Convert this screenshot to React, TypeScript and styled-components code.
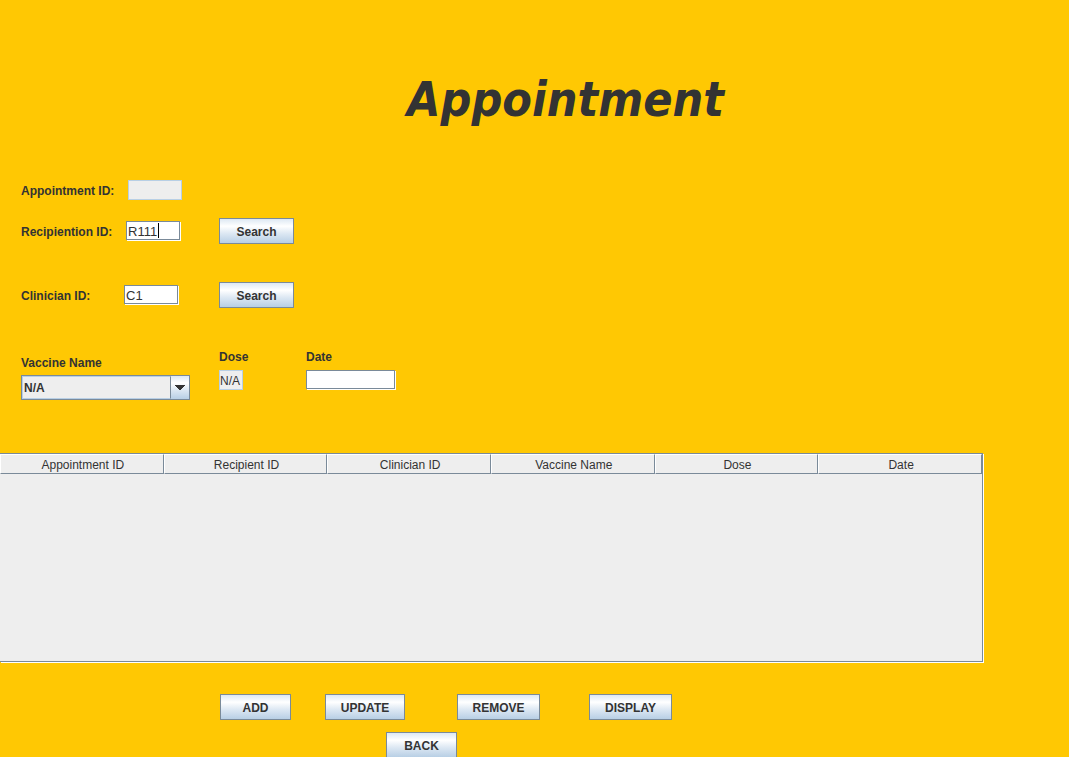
import React from "react";
import styled, { createGlobalStyle, css } from "styled-components";

const ink = "#333333";
const line = "#7a8a99";
const pale = "#b8cfe5";
const panel = "#eeeeee";

const GlobalStyle = createGlobalStyle`
  *, *::before, *::after { box-sizing: border-box; }
  body {
    margin: 0;
    background: #ffc803;
    color: ${ink};
    font: 12px/16px "Liberation Sans", Arial, sans-serif;
  }
`;

const metalGradient = css`
  background: linear-gradient(#dde8f3 0%, #ffffff 30%, #dde8f3 60%, ${pale} 100%);
`;

const Page = styled.main`
  height: 100vh;
  overflow: auto;
  scrollbar-width: none;
`;

const Title = styled.h1`
  margin: 0;
  padding: 70px 0 52px 62px;
  font: italic bold 48px/58px "DejaVu Sans Condensed", "DejaVu Sans", sans-serif;
  text-align: center;
`;

const Form = styled.form`
  padding-left: 21px;
`;

const Row = styled.div<{ $gap?: number }>`
  display: grid;
  grid-template-columns: 198px auto;
  justify-content: start;
  align-items: center;
  margin-bottom: ${(p) => p.$gap ?? 0}px;
`;

const Entry = styled.div<{ $labelWidth: number }>`
  display: grid;
  grid-template-columns: ${(p) => p.$labelWidth}px auto;
  justify-content: start;
  align-items: center;
`;

const Label = styled.label`
  padding-top: 2px;
  font-weight: bold;
  white-space: nowrap;
`;

const InputWrap = styled.span`
  position: relative;
  display: flex;
`;

const Caret = styled.span`
  position: absolute;
  left: 32px;
  top: 2px;
  width: 1px;
  height: 15px;
  background: #000;
`;

const Input = styled.input<{ $width: number }>`
  display: block;
  width: ${(p) => p.$width}px;
  height: 19px;
  margin: 0 0 1px;
  padding: 1px 1px 0;
  border: 1px solid ${line};
  border-radius: 0;
  outline: none;
  background: #fff;
  box-shadow: 1px 1px 0 #fff;
  color: ${ink};
  font: 13px/16px "Liberation Sans", Arial, sans-serif;

  &:read-only {
    height: 20px;
    margin: 0;
    padding: 1px 0 0;
    border-color: ${pale};
    background: ${panel};
    box-shadow: none;
    font-size: 12px;
  }
`;

const Button = styled.button<{ $width: number }>`
  width: ${(p) => p.$width}px;
  height: 26px;
  padding: 1px 0 0;
  border: 1px solid ${line};
  border-radius: 0;
  ${metalGradient}
  color: ${ink};
  font: bold 12px/16px "Liberation Sans", Arial, sans-serif;
`;

const Details = styled.div`
  display: grid;
  grid-template-columns: 198px 87px auto;
  justify-content: start;
  align-items: start;
`;

const Stack = styled.div<{ $top?: number; $gap?: number }>`
  display: flex;
  flex-direction: column;
  align-items: flex-start;
  gap: ${(p) => p.$gap ?? 5}px;
  padding-top: ${(p) => p.$top ?? 0}px;
`;

const Combo = styled.div`
  display: grid;
  grid-template-columns: 149px 18px;
  height: 25px;
  border: 1px solid ${line};
  ${metalGradient}
`;

const Select = styled.select`
  appearance: none;
  width: 100%;
  height: 23px;
  padding: 0 1px;
  border: 1px solid ${pale};
  border-right: 1px solid ${line};
  border-radius: 0;
  outline: none;
  background: ${panel};
  color: ${ink};
  font: bold 12px/16px "Liberation Sans", Arial, sans-serif;
`;

const Arrow = styled.svg`
  align-self: center;
  justify-self: center;
  pointer-events: none;
`;

const TablePanel = styled.section`
  height: 209px;
  margin: 53px 86px 32px 0;
  border: 1px solid ${line};
  border-left: 0;
  background: ${panel};
  box-shadow: 1px 1px 0 #fff;
`;

const Table = styled.table`
  width: 100%;
  table-layout: fixed;
  border-collapse: separate;
  border-spacing: 0;
`;

const Th = styled.th`
  height: 20px;
  padding: 2px 0 0 2px;
  border: solid;
  border-width: 1px;
  border-color: #fff ${line} ${line} #fff;
  font-weight: normal;
  line-height: 16px;
`;

const Actions = styled.div`
  display: grid;
  grid-template-columns: 105px 132px 132px auto;
  justify-content: start;
  padding-left: 220px;
`;

const Back = styled.div`
  padding: 12px 0 0 386px;
`;

const columns = ["Appointment ID", "Recipient ID", "Clinician ID", "Vaccine Name", "Dose", "Date"];
const actions = [
  { name: "ADD", width: 71 },
  { name: "UPDATE", width: 80 },
  { name: "REMOVE", width: 83 },
  { name: "DISPLAY", width: 83 },
];

export default function App() {
  return (
    <>
      <GlobalStyle />
      <Page>
        <Title>Appointment</Title>
        <Form onSubmit={(e) => e.preventDefault()}>
          <Row $gap={18}>
            <Entry $labelWidth={107}>
              <Label htmlFor="appointment">Appointment ID:</Label>
              <Input id="appointment" $width={54} readOnly />
            </Entry>
          </Row>
          <Row $gap={38}>
            <Entry $labelWidth={105}>
              <Label htmlFor="recipient">Recipiention ID:</Label>
              <InputWrap>
                <Input id="recipient" $width={54} defaultValue="R111" />
                <Caret />
              </InputWrap>
            </Entry>
            <Button type="button" $width={75}>Search</Button>
          </Row>
          <Row $gap={39}>
            <Entry $labelWidth={103}>
              <Label htmlFor="clinician">Clinician ID:</Label>
              <Input id="clinician" $width={54} defaultValue="C1" />
            </Entry>
            <Button type="button" $width={75}>Search</Button>
          </Row>
          <Details>
            <Stack $top={6} $gap={4}>
              <Label htmlFor="vaccine">Vaccine Name</Label>
              <Combo>
                <Select id="vaccine" defaultValue="N/A">
                  <option>N/A</option>
                </Select>
                <Arrow width="10" height="5" viewBox="0 0 10 5" shapeRendering="crispEdges" aria-hidden="true">
                  <path d="M0 0H10V1H9V2H8V3H7V4H6V5H4V4H3V3H2V2H1V1H0Z" fill={ink} />
                </Arrow>
              </Combo>
            </Stack>
            <Stack>
              <Label htmlFor="dose">Dose</Label>
              <Input id="dose" $width={24} defaultValue="N/A" readOnly />
            </Stack>
            <Stack>
              <Label htmlFor="date">Date</Label>
              <Input id="date" $width={89} />
            </Stack>
          </Details>
        </Form>
        <TablePanel>
          <Table>
            <thead>
              <tr>
                {columns.map((name) => (
                  <Th key={name} scope="col">{name}</Th>
                ))}
              </tr>
            </thead>
          </Table>
        </TablePanel>
        <Actions>
          {actions.map((a) => (
            <Button key={a.name} type="button" $width={a.width}>{a.name}</Button>
          ))}
        </Actions>
        <Back>
          <Button type="button" $width={71}>BACK</Button>
        </Back>
      </Page>
    </>
  );
}
